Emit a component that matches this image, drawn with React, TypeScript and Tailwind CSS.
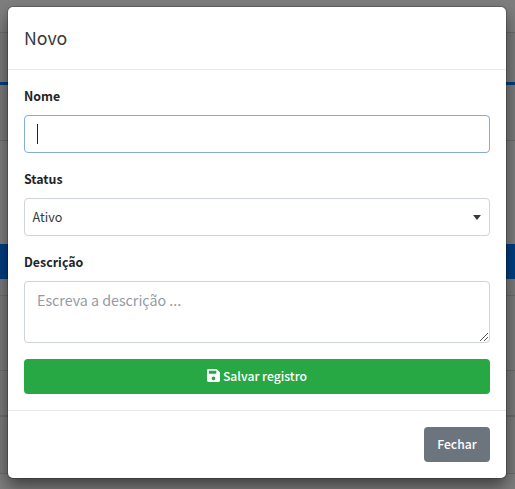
function SaveIcon() {
  return (
    <svg className="mb-[2px] h-[13px] w-[13px]" viewBox="0 0 448 448" fill="currentColor" aria-hidden="true">
      <path
        fillRule="evenodd"
        d="M48 0H310c13 0 25 5 34 14l90 90c9 9 14 21 14 34v262c0 27-21 48-48 48H48c-27 0-48-21-48-48V48C0 21 21 0 48 0zM64 64v96h256V64zM224 256a64 64 0 1 0 0 128a64 64 0 1 0 0-128z"
      />
    </svg>
  );
}

function Backdrop() {
  return (
    <div className="flex h-full flex-col bg-[#7a7a7a]">
      <div className="h-[33px] shrink-0 border-b border-[#6b6b6b] bg-[#7e7e7e]" />
      <div className="h-[49px] shrink-0" />
      <div className="h-[3px] shrink-0 bg-[#003d80]" />
      <div className="h-[56px] shrink-0 border-b border-[#6b6b6b]" />
      <div className="h-[103px] shrink-0 bg-[#7e7e7e]" />
      <div className="h-[35px] shrink-0 bg-[#003e80]" />
      <div className="h-[17px] shrink-0 border-b border-[#6b6b6b]" />
      <div className="h-[75px] shrink-0 border-b border-[#6b6b6b]" />
      <div className="h-[46px] shrink-0 border-b-2 border-[#6b6b6b]" />
      <div className="h-[57px] shrink-0 border-b border-[#6b6b6b]" />
      <div className="grow bg-[#7e7e7e]" />
    </div>
  );
}

export default function App() {
  return (
    <div className="relative h-[489px] w-[515px] overflow-hidden font-['Noto_Sans_CJK_JP','Noto_Sans',sans-serif] text-[#212529]">
      <Backdrop />
      <div className="absolute inset-0 pt-[7px] pl-2">
        <div className="flex h-[471px] w-[498px] flex-col rounded-[5px] bg-white shadow-[0_8px_16px_rgba(0,0,0,0.5),0_0_0_1px_rgba(0,0,0,0.2)]">
          <header className="flex h-[63px] shrink-0 items-center border-b border-[#e9ecef] px-4 pb-[2px]">
            <h1 className="text-[17.7px] leading-[30px] text-[#343a40]">Novo</h1>
          </header>
          <form className="flex flex-col px-4 pt-4">
            <label className="h-[29px] text-[12.4px] leading-[20px] font-bold">Nome</label>
            <div className="flex h-[38px] items-center rounded-[4px] border border-[#80adde] px-3">
              <span className="h-5 w-px bg-[#212529]" />
            </div>
            <label className="mt-4 h-[29px] text-[12.4px] leading-[20px] font-bold">Status</label>
            <div className="flex h-[38px] items-center justify-between rounded-[4px] border border-[#ced4da] pr-[8px] pl-[7.5px]">
              <span className="pb-[2px] text-[12.6px] leading-[21px] text-[#343a40]">Ativo</span>
              <svg className="h-[5px] w-2" viewBox="0 0 8 5" fill="#343a40">
                <path d="M0 0h8L4 5z" />
              </svg>
            </div>
            <label className="mt-4 h-[29px] text-[12.4px] leading-[20px] font-bold">Descrição</label>
            <div className="flex h-[62px] justify-between rounded-[4px] border border-[#ced4da] pt-[6px] pr-px pl-3">
              <span className="text-[14.25px] leading-6 text-[#939ba2]">Escreva a descrição ...</span>
              <svg className="mb-px h-[8px] w-[8px] self-end" viewBox="0 0 8 8" stroke="#555" fill="none">
                <path d="M0 8L8 0M4 8L8 4" />
              </svg>
            </div>
            <button
              type="button"
              className="mt-4 flex h-[35px] items-center justify-center gap-[3px] rounded-[4px] bg-[#28a745] text-[12.2px] leading-[21px] font-medium text-white"
            >
              <SaveIcon />
              <span>Salvar registro</span>
            </button>
          </form>
          <footer className="mt-4 flex grow items-center justify-end border-t border-[#e9ecef] px-4">
            <button type="button" className="h-[35px] w-[66px] rounded-[4px] bg-[#6c757d] text-[12.2px] leading-[21px] font-medium text-white">
              Fechar
            </button>
          </footer>
        </div>
      </div>
    </div>
  );
}
